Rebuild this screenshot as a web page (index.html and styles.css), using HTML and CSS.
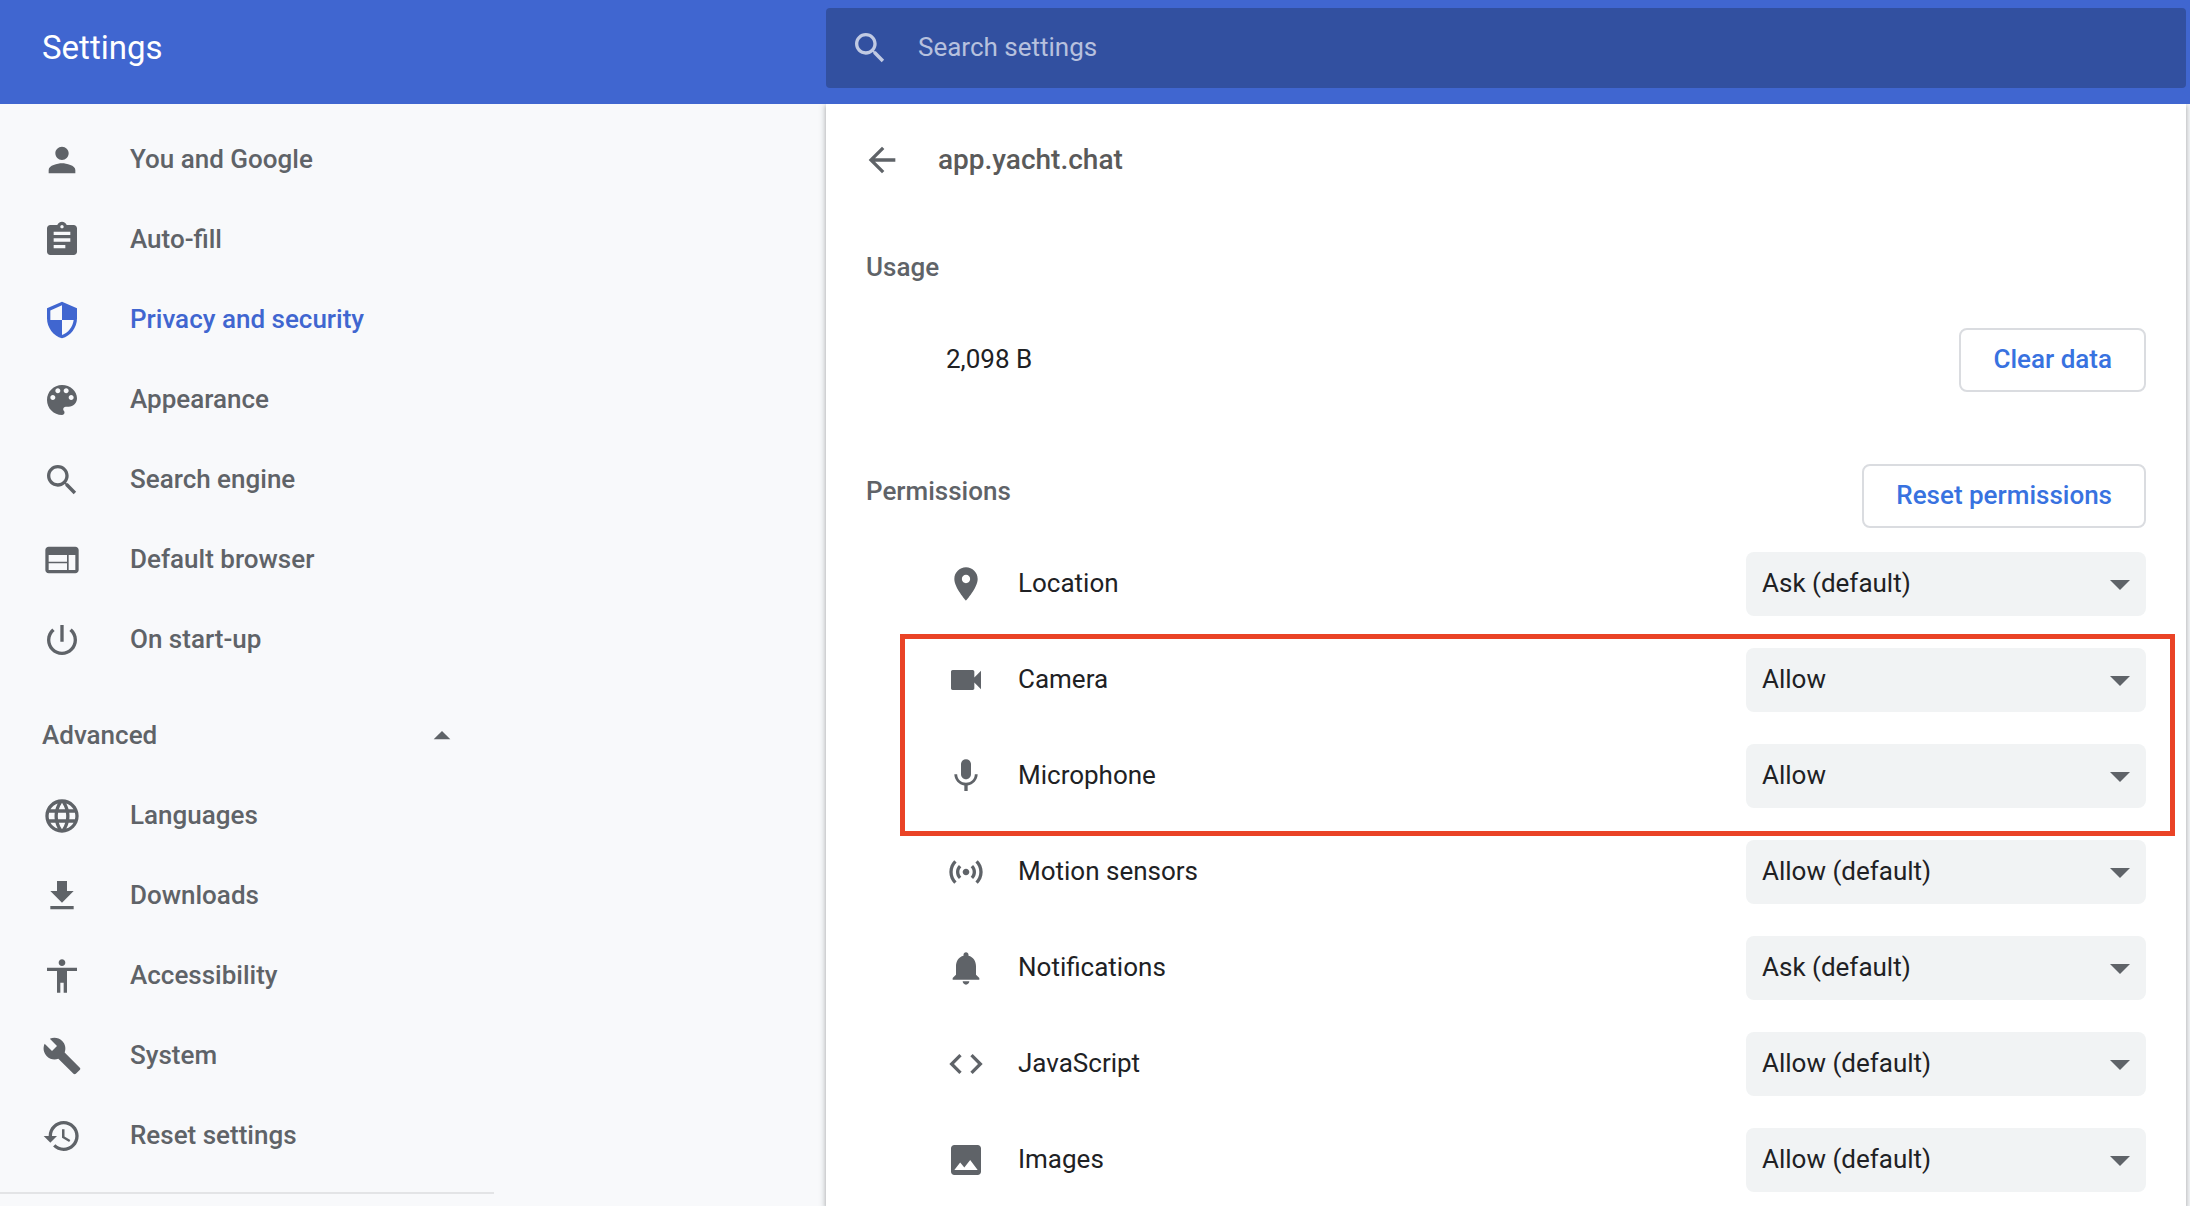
FILE: index.html
```html
<!DOCTYPE html>
<html lang="en-GB">
<head>
<meta charset="utf-8">
<title>Settings</title>
<link rel="stylesheet" href="styles.css">
</head>
<body>
<div class="page">
  <header class="toolbar">
    <h1 class="toolbar-title">Settings</h1>
    <label class="search">
      <svg class="icon" viewBox="0 0 24 24" aria-hidden="true"><path d="M15.5 14h-.79l-.28-.27C15.41 12.59 16 11.11 16 9.5 16 5.91 13.09 3 9.5 3S3 5.91 3 9.5 5.91 16 9.5 16c1.61 0 3.09-.59 4.23-1.57l.27.28v.79l5 4.99L20.49 19l-4.99-5zm-6 0C7.01 14 5 11.99 5 9.5S7.01 5 9.5 5 14 7.01 14 9.5 11.99 14 9.5 14z"/></svg>
      <input class="search-input" type="text" placeholder="Search settings" aria-label="Search settings">
    </label>
  </header>

  <nav class="sidebar">
    <a class="nav-item" href="#people"><svg class="icon" viewBox="0 0 24 24" aria-hidden="true"><path d="M12 12c2.21 0 4-1.79 4-4s-1.79-4-4-4-4 1.79-4 4 1.79 4 4 4zm0 2c-2.67 0-8 1.34-8 4v2h16v-2c0-2.66-5.33-4-8-4z"/></svg><span class="text">You and Google</span></a>
    <a class="nav-item" href="#autofill"><svg class="icon" viewBox="0 0 24 24" aria-hidden="true"><path d="M19 3h-4.18C14.4 1.84 13.3 1 12 1c-1.3 0-2.4.84-2.82 2H5c-1.1 0-2 .9-2 2v14c0 1.1.9 2 2 2h14c1.1 0 2-.9 2-2V5c0-1.1-.9-2-2-2zm-7 0c.55 0 1 .45 1 1s-.45 1-1 1-1-.45-1-1 .45-1 1-1zm2 14H7v-2h7v2zm3-4H7v-2h10v2zm0-4H7V7h10v2z"/></svg><span class="text">Auto-fill</span></a>
    <a class="nav-item nav-item-selected" href="#privacy" aria-current="page"><svg class="icon" viewBox="0 0 24 24" aria-hidden="true"><path d="M12 1L3 5v6c0 5.55 3.84 10.74 9 12 5.16-1.26 9-6.45 9-12V5l-9-4zm0 10.99h7c-.53 4.12-3.28 7.79-7 8.94V12H5V6.3l7-3.11v8.8z"/></svg><span class="text">Privacy and security</span></a>
    <a class="nav-item" href="#appearance"><svg class="icon" viewBox="0 0 24 24" aria-hidden="true"><path d="M12 3c-4.97 0-9 4.03-9 9s4.03 9 9 9c.83 0 1.5-.67 1.5-1.5 0-.39-.15-.74-.39-1.01-.23-.26-.38-.61-.38-.99 0-.83.67-1.5 1.5-1.5H16c2.76 0 5-2.24 5-5 0-4.42-4.03-8-9-8zm-5.5 9c-.83 0-1.5-.67-1.5-1.5S5.67 9 6.5 9 8 9.67 8 10.5 7.33 12 6.5 12zm3-4C8.67 8 8 7.33 8 6.5S8.67 5 9.5 5s1.5.67 1.5 1.5S10.33 8 9.5 8zm5 0c-.83 0-1.5-.67-1.5-1.5S13.67 5 14.5 5s1.5.67 1.5 1.5S15.33 8 14.5 8zm3 4c-.83 0-1.5-.67-1.5-1.5S16.67 9 17.5 9s1.5.67 1.5 1.5-.67 1.5-1.5 1.5z"/></svg><span class="text">Appearance</span></a>
    <a class="nav-item" href="#search"><svg class="icon" viewBox="0 0 24 24" aria-hidden="true"><path d="M15.5 14h-.79l-.28-.27C15.41 12.59 16 11.11 16 9.5 16 5.91 13.09 3 9.5 3S3 5.91 3 9.5 5.91 16 9.5 16c1.61 0 3.09-.59 4.23-1.57l.27.28v.79l5 4.99L20.49 19l-4.99-5zm-6 0C7.01 14 5 11.99 5 9.5S7.01 5 9.5 5 14 7.01 14 9.5 11.99 14 9.5 14z"/></svg><span class="text">Search engine</span></a>
    <a class="nav-item" href="#default-browser"><svg class="icon" viewBox="0 0 24 24" aria-hidden="true"><path d="M20 4H4c-1.1 0-1.99.9-1.99 2L2 18c0 1.1.9 2 2 2h16c1.1 0 2-.9 2-2V6c0-1.1-.9-2-2-2zm-5 14H4v-4h11v4zm0-5H4V9h11v4zm5 5h-4V9h4v9z"/></svg><span class="text">Default browser</span></a>
    <a class="nav-item" href="#startup"><svg class="icon" viewBox="0 0 24 24" aria-hidden="true"><path d="M13 3h-2v10h2V3zm4.83 2.17l-1.42 1.42C17.99 7.86 19 9.81 19 12c0 3.87-3.13 7-7 7s-7-3.13-7-7c0-2.19 1.01-4.14 2.58-5.42L6.17 5.17C4.23 6.82 3 9.26 3 12c0 4.97 4.03 9 9 9s9-4.03 9-9c0-2.74-1.23-5.18-3.17-6.83z"/></svg><span class="text">On start-up</span></a>
    <button class="nav-toggle" type="button" aria-expanded="true"><span class="text">Advanced</span><svg class="icon" viewBox="0 0 24 24" aria-hidden="true"><path d="M7 14l5-5 5 5z"/></svg></button>
    <a class="nav-item" href="#languages"><svg class="icon" viewBox="0 0 24 24" aria-hidden="true"><path d="M11.99 2C6.47 2 2 6.48 2 12s4.47 10 9.99 10C17.52 22 22 17.52 22 12S17.52 2 11.99 2zm6.93 6h-2.95c-.32-1.25-.78-2.45-1.38-3.56 1.84.63 3.37 1.91 4.33 3.56zM12 4.04c.83 1.2 1.48 2.53 1.91 3.96h-3.82c.43-1.43 1.08-2.76 1.91-3.96zM4.26 14C4.1 13.36 4 12.69 4 12s.1-1.36.26-2h3.38c-.08.66-.14 1.32-.14 2 0 .68.06 1.34.14 2H4.26zm.82 2h2.95c.32 1.25.78 2.45 1.38 3.56-1.84-.63-3.37-1.9-4.33-3.56zm2.95-8H5.08c.96-1.66 2.49-2.93 4.33-3.56C8.81 5.55 8.35 6.75 8.03 8zM12 19.96c-.83-1.2-1.48-2.53-1.91-3.96h3.82c-.43 1.43-1.08 2.76-1.91 3.96zM14.34 14H9.66c-.09-.66-.16-1.32-.16-2 0-.68.07-1.35.16-2h4.68c.09.65.16 1.32.16 2 0 .68-.07 1.34-.16 2zm.25 5.56c.6-1.11 1.06-2.31 1.38-3.56h2.95c-.96 1.65-2.49 2.93-4.33 3.56zM16.36 14c.08-.66.14-1.32.14-2 0-.68-.06-1.34-.14-2h3.38c.16.64.26 1.31.26 2s-.1 1.36-.26 2h-3.38z"/></svg><span class="text">Languages</span></a>
    <a class="nav-item" href="#downloads"><svg class="icon" viewBox="0 0 24 24" aria-hidden="true"><path d="M19 9h-4V3H9v6H5l7 7 7-7zM5 18v2h14v-2H5z"/></svg><span class="text">Downloads</span></a>
    <a class="nav-item" href="#accessibility"><svg class="icon" viewBox="0 0 24 24" aria-hidden="true"><path d="M12 2c1.1 0 2 .9 2 2s-.9 2-2 2-2-.9-2-2 .9-2 2-2zm9 7h-6v13h-2v-6h-2v6H9V9H3V7h18v2z"/></svg><span class="text">Accessibility</span></a>
    <a class="nav-item" href="#system"><svg class="icon" viewBox="0 0 24 24" aria-hidden="true"><path d="M22.7 19l-9.1-9.1c.9-2.3.4-5-1.5-6.9-2-2-5-2.4-7.4-1.3L9 6 6 9 1.6 4.7C.4 7.1.9 10.1 2.9 12.1c1.9 1.9 4.6 2.4 6.9 1.5l9.1 9.1c.4.4 1 .4 1.4 0l2.3-2.3c.5-.4.5-1.1.1-1.4z"/></svg><span class="text">System</span></a>
    <a class="nav-item" href="#reset"><svg class="icon" viewBox="0 0 24 24" aria-hidden="true"><path d="M13 3c-4.97 0-9 4.03-9 9H1l3.89 3.89.07.14L9 12H6c0-3.87 3.13-7 7-7s7 3.13 7 7-3.13 7-7 7c-1.93 0-3.68-.79-4.94-2.06l-1.42 1.42C8.27 19.99 10.51 21 13 21c4.97 0 9-4.03 9-9s-4.03-9-9-9zm-1 5v5l4.28 2.54.72-1.21-3.5-2.08V8H12z"/></svg><span class="text">Reset settings</span></a>
    <hr class="nav-divider">
  </nav>

  <main class="card">
    <div class="site-header">
      <button class="back" type="button" aria-label="Back"><svg class="icon" viewBox="0 0 24 24" aria-hidden="true"><path d="M20 11H7.83l5.59-5.59L12 4l-8 8 8 8 1.41-1.41L7.83 13H20v-2z"/></svg></button>
      <h2 class="site-title">app.yacht.chat</h2>
    </div>

    <section class="usage">
      <h3 class="section-title">Usage</h3>
      <div class="usage-row">
        <span class="text">2,098 B</span>
        <button class="action" type="button">Clear data</button>
      </div>
    </section>

    <section class="permissions">
      <div class="permissions-header">
        <h3 class="section-title">Permissions</h3>
        <button class="action" type="button">Reset permissions</button>
      </div>
      <div class="permission-list">
        <div class="permission">
          <svg class="icon" viewBox="0 0 24 24" aria-hidden="true"><path d="M12 2C8.13 2 5 5.13 5 9c0 5.25 7 13 7 13s7-7.75 7-13c0-3.87-3.13-7-7-7zm0 9.5c-1.38 0-2.5-1.12-2.5-2.5s1.12-2.5 2.5-2.5 2.5 1.12 2.5 2.5-1.12 2.5-2.5 2.5z"/></svg>
          <label class="text" for="location">Location</label>
          <div class="dropdown">
            <select id="location"><option>Ask (default)</option><option>Allow</option><option>Block</option></select>
            <svg class="caret" viewBox="0 0 20 10" aria-hidden="true"><path d="M0 0h20L10 10z"/></svg>
          </div>
        </div>
        <div class="highlighted">
          <div class="permission">
            <svg class="icon" viewBox="0 0 24 24" aria-hidden="true"><path d="M17 10.5V7c0-.55-.45-1-1-1H4c-.55 0-1 .45-1 1v10c0 .55.45 1 1 1h12c.55 0 1-.45 1-1v-3.5l4 4v-11l-4 4z"/></svg>
            <label class="text" for="camera">Camera</label>
            <div class="dropdown">
              <select id="camera"><option>Allow</option><option>Ask (default)</option><option>Block</option></select>
              <svg class="caret" viewBox="0 0 20 10" aria-hidden="true"><path d="M0 0h20L10 10z"/></svg>
            </div>
          </div>
          <div class="permission">
            <svg class="icon" viewBox="0 0 24 24" aria-hidden="true"><path d="M12 14c1.66 0 2.99-1.34 2.99-3L15 5c0-1.66-1.34-3-3-3S9 3.34 9 5v6c0 1.66 1.34 3 3 3zm5.3-3c0 3-2.54 5.1-5.3 5.1S6.7 14 6.7 11H5c0 3.41 2.72 6.23 6 6.72V21h2v-3.28c3.28-.48 6-3.3 6-6.72h-1.7z"/></svg>
            <label class="text" for="microphone">Microphone</label>
            <div class="dropdown">
              <select id="microphone"><option>Allow</option><option>Ask (default)</option><option>Block</option></select>
              <svg class="caret" viewBox="0 0 20 10" aria-hidden="true"><path d="M0 0h20L10 10z"/></svg>
            </div>
          </div>
        </div>
        <div class="permission">
          <svg class="icon" viewBox="0 0 24 24" aria-hidden="true"><path d="M7.76 16.24C6.67 15.16 6 13.66 6 12s.67-3.16 1.76-4.24l1.42 1.42C8.45 9.9 8 10.9 8 12c0 1.1.45 2.1 1.17 2.83l-1.41 1.41zm8.48 0C17.33 15.16 18 13.66 18 12s-.67-3.16-1.76-4.24l-1.42 1.42C15.55 9.9 16 10.9 16 12c0 1.1-.45 2.1-1.17 2.83l1.41 1.41zM12 10c-1.1 0-2 .9-2 2s.9 2 2 2 2-.9 2-2-.9-2-2-2zm8 2c0 2.21-.9 4.21-2.35 5.65l1.42 1.42C20.88 17.26 22 14.76 22 12s-1.12-5.26-2.93-7.07l-1.42 1.42C19.1 7.79 20 9.79 20 12zM6.35 6.35L4.93 4.93C3.12 6.74 2 9.24 2 12s1.12 5.26 2.93 7.07l1.42-1.42C4.9 16.21 4 14.21 4 12s.9-4.21 2.35-5.65z"/></svg>
          <label class="text" for="sensors">Motion sensors</label>
          <div class="dropdown">
            <select id="sensors"><option>Allow (default)</option><option>Allow</option><option>Block</option></select>
            <svg class="caret" viewBox="0 0 20 10" aria-hidden="true"><path d="M0 0h20L10 10z"/></svg>
          </div>
        </div>
        <div class="permission">
          <svg class="icon" viewBox="0 0 24 24" aria-hidden="true"><path d="M12 22c1.1 0 2-.9 2-2h-4c0 1.1.89 2 2 2zm6-6v-5c0-3.07-1.64-5.64-4.5-6.32V4c0-.83-.67-1.5-1.5-1.5s-1.5.67-1.5 1.5v.68C7.63 5.36 6 7.92 6 11v5l-2 2v1h16v-1l-2-2z"/></svg>
          <label class="text" for="notifications">Notifications</label>
          <div class="dropdown">
            <select id="notifications"><option>Ask (default)</option><option>Allow</option><option>Block</option></select>
            <svg class="caret" viewBox="0 0 20 10" aria-hidden="true"><path d="M0 0h20L10 10z"/></svg>
          </div>
        </div>
        <div class="permission">
          <svg class="icon" viewBox="0 0 24 24" aria-hidden="true"><path d="M9.4 16.6L4.8 12l4.6-4.6L8 6l-6 6 6 6 1.4-1.4zm5.2 0l4.6-4.6-4.6-4.6L16 6l6 6-6 6-1.4-1.4z"/></svg>
          <label class="text" for="javascript">JavaScript</label>
          <div class="dropdown">
            <select id="javascript"><option>Allow (default)</option><option>Allow</option><option>Block</option></select>
            <svg class="caret" viewBox="0 0 20 10" aria-hidden="true"><path d="M0 0h20L10 10z"/></svg>
          </div>
        </div>
        <div class="permission">
          <svg class="icon" viewBox="0 0 24 24" aria-hidden="true"><path d="M21 19V5c0-1.1-.9-2-2-2H5c-1.1 0-2 .9-2 2v14c0 1.1.9 2 2 2h14c1.1 0 2-.9 2-2zM8.5 13.5l2.5 3.01L14.5 12l4.5 6H5l3.5-4.5z"/></svg>
          <label class="text" for="images">Images</label>
          <div class="dropdown">
            <select id="images"><option>Allow (default)</option><option>Allow</option><option>Block</option></select>
            <svg class="caret" viewBox="0 0 20 10" aria-hidden="true"><path d="M0 0h20L10 10z"/></svg>
          </div>
        </div>
      </div>
    </section>
  </main>
</div>
</body>
</html>
```
FILE: styles.css
```css
:root {
  --brand: #4066d0;
  --grey: #5f6368;
  --ink: #202124;
  --side: 826px;
}

* {
  box-sizing: border-box;
}

body {
  margin: 0;
  background: #f8f9fb;
  color: var(--ink);
  font: 400 26px/32px Roboto, "Liberation Sans", sans-serif;
}

h1, h2, h3 {
  margin: 0;
  font-weight: 500;
}

button, input, select {
  margin: 0;
  padding: 0;
  border: 0;
  background: none;
  color: inherit;
  font: inherit;
}

.icon {
  flex: none;
  width: 40px;
  height: 40px;
  fill: currentColor;
}

/* Optical centring of a label beside its icon */
.text {
  padding-bottom: 2px;
}

.page {
  display: grid;
  grid-template: auto minmax(0, 1fr) / var(--side) minmax(0, 1fr);
  height: 100vh;
  overflow: hidden;
}

/* Toolbar */
.toolbar {
  grid-column: 1 / -1;
  z-index: 1;
  display: grid;
  grid-template-columns: var(--side) minmax(0, 1fr);
  align-items: center;
  padding: 8px 4px 16px 0;
  background: var(--brand);
  color: #fff;
}

.toolbar-title {
  padding-left: 42px;
  font-size: 33px;
  font-weight: 400;
}

.search {
  display: flex;
  align-items: center;
  gap: 28px;
  height: 80px;
  padding: 0 24px;
  border-radius: 4px;
  background: #3250a0;
  color: #c1cae3;
}

.search-input {
  flex: 1;
  min-width: 0;
  padding-bottom: 2px;
  outline: 0;
}

.search-input::placeholder {
  color: #b7c1de;
}

/* Sidebar */
.sidebar {
  padding-top: 16px;
  color: var(--grey);
  font-weight: 500;
}

.nav-item,
.nav-toggle {
  display: flex;
  align-items: center;
  height: 80px;
  padding-left: 42px;
}

.nav-item {
  gap: 48px;
  color: inherit;
  text-decoration: none;
}

.nav-item-selected {
  color: var(--brand);
}

.nav-toggle {
  justify-content: space-between;
  width: 462px;
  margin-top: 16px;
}

.nav-divider {
  width: 494px;
  height: 2px;
  margin: 16px 0 0;
  border: 0;
  background: #e3e4e6;
}

/* Site details */
.card {
  margin-right: 4px;
  padding: 16px 40px 0;
  background: #fff;
  box-shadow: 0 2px 4px rgba(60, 64, 67, .3), 0 2px 6px 2px rgba(60, 64, 67, .15);
}

.site-header {
  display: flex;
  align-items: center;
  gap: 36px;
  height: 80px;
  margin-left: -4px;
}

.back {
  display: flex;
  color: var(--grey);
}

.site-title {
  color: #5a5a5a;
  font-size: 28px;
  line-height: 34px;
}

.section-title {
  color: var(--grey);
  font-size: 26px;
  line-height: 54px;
}

.usage {
  padding-top: 40px;
}

.usage-row {
  display: flex;
  align-items: center;
  justify-content: space-between;
  height: 96px;
  margin-top: 18px;
  padding-left: 80px;
}

.action {
  height: 64px;
  padding: 0 32px 2px;
  border: 2px solid #dadce0;
  border-radius: 8px;
  color: #3872e0;
  font-weight: 500;
}

.permissions {
  padding-top: 56px;
}

.permissions-header {
  display: flex;
  align-items: flex-start;
  justify-content: space-between;
  margin-bottom: 8px;
}

.permission-list {
  padding-left: 80px;
}

.permission {
  display: flex;
  align-items: center;
  gap: 32px;
  height: 96px;
}

.permission > .icon {
  color: var(--grey);
}

.dropdown {
  display: grid;
  align-items: center;
  width: 400px;
  margin-left: auto;
}

.dropdown select {
  grid-area: 1 / 1;
  height: 64px;
  padding: 0 48px 2px 16px;
  border-radius: 8px;
  background: #f1f3f4;
  appearance: none;
}

.caret {
  grid-area: 1 / 1;
  justify-self: end;
  width: 20px;
  height: 10px;
  margin: 2px 16px 0 0;
  fill: var(--grey);
  pointer-events: none;
}

/* Red frame drawn around the camera and microphone rows */
.highlighted {
  position: relative;
}

.highlighted::after {
  content: "";
  position: absolute;
  inset: 2px -29px -12px -46px;
  border: 5px solid #ea4326;
  pointer-events: none;
}
```
